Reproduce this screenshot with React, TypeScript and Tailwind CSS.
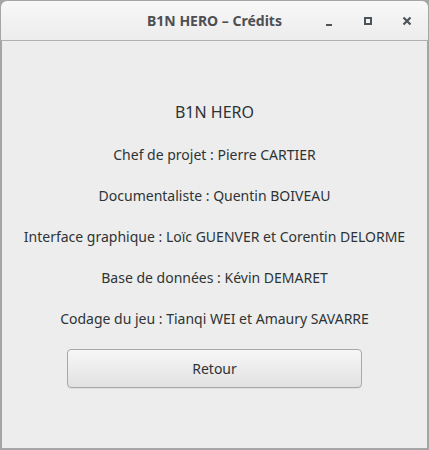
import React from "react";

const credits = [
  "Chef de projet : Pierre CARTIER",
  "Documentaliste : Quentin BOIVEAU",
  "Interface graphique : Loïc GUENVER et Corentin DELORME",
  "Base de données : Kévin DEMARET",
  "Codage du jeu : Tianqi WEI et Amaury SAVARRE",
];

export default function App() {
  return (
    <div
      className="w-[429px] h-[450px] flex flex-col bg-[#a5a5a5] text-[#2e3436]"
      style={{ fontFamily: '"Noto Sans", "DejaVu Sans", sans-serif' }}
    >
      <div className="h-[40px] flex items-center rounded-t-[6px] border-b border-[#b0b0b0] bg-gradient-to-b from-[#f8f8f8] to-[#ececec] mx-[1px] mt-[1px]">
        <div className="flex-1 text-center pl-[105px] text-[14px] font-bold text-[#4d4f52]">
          B1N HERO – Crédits
        </div>
        <div className="flex items-center gap-[27px] pr-[15px]">
          <div className="w-[12px] h-[12px] flex items-end justify-center pb-[1px]">
            <div className="w-[6px] h-[2px] bg-[#4d5459]" />
          </div>
          <div className="w-[12px] h-[12px] flex items-center justify-center">
            <div className="w-[8px] h-[8px] border-2 border-[#4d5459]" />
          </div>
          <svg width="12" height="12" viewBox="0 0 12 12">
            <path d="M2.5 2.5 L9.5 9.5 M9.5 2.5 L2.5 9.5" stroke="#4d5459" strokeWidth="2.2" />
          </svg>
        </div>
      </div>
      <div className="flex-1 mx-[2px] mb-[2px] bg-[#ededed] flex flex-col items-center pt-[59px]">
        <div className="text-[16px] leading-[24px] mb-[21px]">B1N HERO</div>
        {credits.map((c) => (
          <div key={c} className="text-[14px] leading-[20px] h-[41px]">
            {c}
          </div>
        ))}
        <button className="mt-[-1px] w-[295px] h-[39px] rounded-[4px] border border-[#a8a8a8] bg-gradient-to-b from-[#f7f7f7] to-[#e1e1e1] text-[14px] text-[#2e3436] shadow-[0_1px_0_rgba(0,0,0,0.05)]">
          Retour
        </button>
      </div>
    </div>
  );
}
